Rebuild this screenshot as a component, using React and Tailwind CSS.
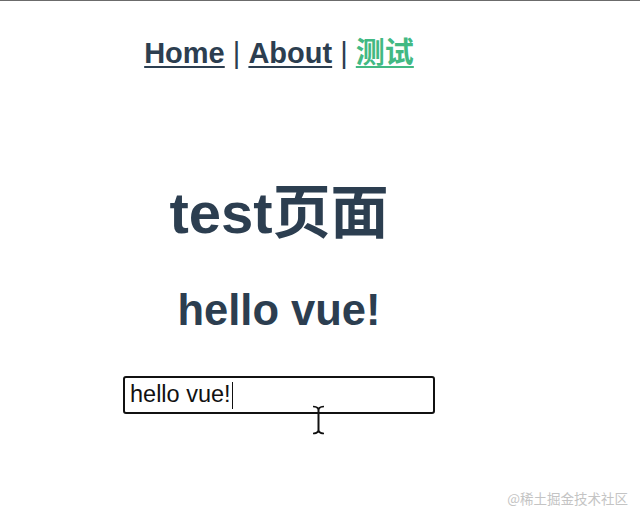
import React from "react";

export default function App() {
  return (
    <div className="relative w-[640px] h-[520px] bg-white overflow-hidden border-t border-[#6b6b6b]">
      <div
        className="w-[558px] text-center text-[#2c3e50]"
        style={{ fontFamily: '"Liberation Sans", Arial, "Noto Sans CJK SC", sans-serif' }}
      >
        <nav className="pt-[36px] text-[29px] leading-[33px] whitespace-pre">
          <a href="#" className="font-bold underline underline-offset-[3px] decoration-[2px] text-[#2c3e50]">Home</a>
          <span> | </span>
          <a href="#" className="font-bold underline underline-offset-[3px] decoration-[2px] text-[#2c3e50]">About</a>
          <span> | </span>
          <a href="#" className="font-bold underline underline-offset-[3px] decoration-[2px] text-[#42b983]">测试</a>
        </nav>
        <h1 className="mt-[110px] text-[58px] leading-[66px] font-bold">test页面</h1>
        <h2 className="mt-[39px] text-[43.5px] leading-[50px] font-bold">hello vue!</h2>
        <div className="mt-[41px] flex justify-center">
          <div className="w-[312px] h-[38px] border-2 border-[#111] rounded-[3px] flex items-center pl-[5px] text-left text-[23.5px] text-[#111]">
            <span>hello vue!</span>
            <span className="inline-block w-[1px] h-[27px] bg-[#111] ml-[1px]"></span>
          </div>
        </div>
      </div>

      <svg
        className="absolute left-[312px] top-[404px]"
        width="13"
        height="30"
        viewBox="0 0 13 30"
        fill="none"
      >
        <path d="M1 1.5 Q5 1.5 6.5 4 Q8 1.5 12 1.5" stroke="#111" strokeWidth="1.6" />
        <path d="M6.5 4 L6.5 26" stroke="#111" strokeWidth="2" />
        <path d="M1 28.5 Q5 28.5 6.5 26 Q8 28.5 12 28.5" stroke="#111" strokeWidth="1.6" />
      </svg>

      <div
        className="absolute right-[12px] top-[489px] text-[13.5px] leading-[16px] text-[#c4c4c4]"
        style={{ fontFamily: '"Noto Sans CJK SC", "Liberation Sans", sans-serif' }}
      >
        @稀土掘金技术社区
      </div>
    </div>
  );
}
